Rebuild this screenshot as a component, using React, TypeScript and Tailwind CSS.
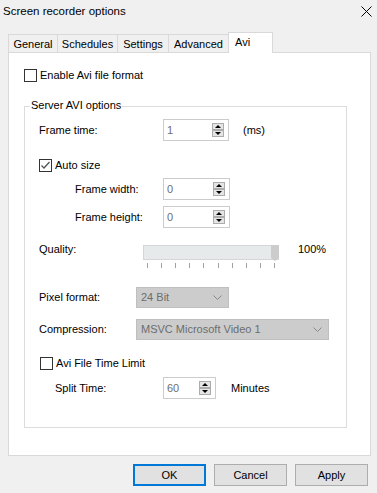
import React from "react";

function Spin() {
  return (
    <svg width="12" height="14" viewBox="0 0 12 14" className="shrink-0">
      <rect x="0.5" y="0.5" width="11" height="6" fill="#e5e5e5" stroke="#acacac" />
      <polygon points="3,5 9,5 6,2" fill="#000" />
      <rect x="0.5" y="7.5" width="11" height="6" fill="#e5e5e5" stroke="#acacac" />
      <polygon points="3,9 9,9 6,12" fill="#000" />
    </svg>
  );
}

function NumInput({ value, w }: { value: string; w: string }) {
  return (
    <div className={`${w} h-[22px] border border-[#cccccc] bg-white flex items-center justify-between pl-[3px] pr-[4px] shrink-0`}>
      <span className="text-[#6d6d6d]">{value}</span>
      <Spin />
    </div>
  );
}

function Check({ checked, label }: { checked?: boolean; label: string }) {
  return (
    <div className="flex items-center gap-[3px] h-[13px]">
      <div className="w-[13px] h-[13px] border border-[#333333] bg-white flex items-center justify-center shrink-0">
        {checked && (
          <svg width="11" height="11" viewBox="0 0 11 11">
            <polyline points="1.5,5.5 4,8 9.5,2" fill="none" stroke="#555555" strokeWidth="1.3" />
          </svg>
        )}
      </div>
      <span className="leading-[15px]">{label}</span>
    </div>
  );
}

function Dropdown({ value, w }: { value: string; w: string }) {
  return (
    <div className={`${w} h-[21px] border border-[#bfbfbf] bg-[#cccccc] flex items-center justify-between pl-[4px] pr-[6px] shrink-0`}>
      <span className="text-[#6d6d6d]">{value}</span>
      <svg width="9" height="5" viewBox="0 0 9 5">
        <polyline points="0.5,0.5 4.5,4.5 8.5,0.5" fill="none" stroke="#8a8a8a" strokeWidth="1" />
      </svg>
    </div>
  );
}

export default function App() {
  const ticks = Array.from({ length: 10 });
  return (
    <div className="w-[377px] h-[493px] bg-[#f0f0f0] text-[11px] text-black font-['Liberation_Sans',Arial,sans-serif] overflow-hidden">
      {/* title bar */}
      <div className="h-[23px] flex items-center justify-between pl-[3px] pr-[5px]">
        <span className="text-[11.5px]">Screen recorder options</span>
        <svg width="11" height="11" viewBox="0 0 11 11">
          <line x1="0.5" y1="0.5" x2="10.5" y2="10.5" stroke="#000" strokeWidth="1" />
          <line x1="10.5" y1="0.5" x2="0.5" y2="10.5" stroke="#000" strokeWidth="1" />
        </svg>
      </div>

      {/* tabs */}
      <div className="h-[29px] flex items-end pl-[8px]">
        <div className="w-[49px] h-[18px] border-l border-t border-[#d9d9d9] flex items-center justify-center pt-[1px]">General</div>
        <div className="w-[60px] h-[18px] border-l border-t border-[#d9d9d9] flex items-center justify-center pt-[1px]">Schedules</div>
        <div className="w-[51px] h-[18px] border-l border-t border-[#d9d9d9] flex items-center justify-center pt-[1px]">Settings</div>
        <div className="w-[60px] h-[18px] border-l border-t border-[#d9d9d9] flex items-center justify-center pt-[1px]">Advanced</div>
        <div className="relative z-10 -mb-px w-[45px] h-[21px] border-l border-t border-r border-[#d9d9d9] bg-white pl-[6px] pt-[2px] leading-[15px]">Avi</div>
      </div>

      {/* panel */}
      <div className="ml-[8px] w-[363px] h-[404px] border border-[#d9d9d9] bg-white pl-[15px]">
        <div className="mt-[16px]">
          <Check label="Enable Avi file format" />
        </div>

        <div className="relative mt-[24px] w-[323px] h-[322px] border border-[#dcdcdc] pl-[14px]">
          <span className="absolute left-[5px] -top-[9px] bg-white px-[1px] leading-[15px]">Server AVI options</span>

          {/* Frame time */}
          <div className="mt-[12px] flex items-center h-[22px]">
            <span className="w-[124px] shrink-0">Frame time:</span>
            <NumInput value="1" w="w-[66px]" />
            <span className="ml-[14px]">(ms)</span>
          </div>

          {/* Auto size */}
          <div className="mt-[18px]">
            <Check checked label="Auto size" />
          </div>

          <div className="mt-[6px] flex items-center h-[22px] pl-[36px]">
            <span className="w-[88px] shrink-0">Frame width:</span>
            <NumInput value="0" w="w-[67px]" />
          </div>
          <div className="mt-[6px] flex items-center h-[22px] pl-[36px]">
            <span className="w-[88px] shrink-0">Frame height:</span>
            <NumInput value="0" w="w-[67px]" />
          </div>

          {/* Quality */}
          <div className="mt-[17px] flex items-start">
            <span className="w-[104px] shrink-0 leading-[15px] -mt-[3px]">Quality:</span>
            <div className="w-[136px] shrink-0">
              <div className="h-[15px] border border-[#d6d6d6] bg-[#e7eaea] flex justify-end">
                <svg width="8" height="16" viewBox="0 0 8 16" className="-mt-px -mr-px">
                  <polygon points="0,0 8,0 8,13 4,16 0,13" fill="#cccccc" />
                </svg>
              </div>
              <div className="mt-[3px] ml-[4px] w-[128px] h-[5px] flex justify-between">
                {ticks.map((_, i) => (
                  <div key={i} className="w-px h-[5px] bg-[#a0a0a0]" />
                ))}
              </div>
            </div>
            <span className="ml-[19px] leading-[15px] -mt-[3px]">100%</span>
          </div>

          {/* Pixel format */}
          <div className="mt-[19px] flex items-center h-[21px]">
            <span className="w-[97px] shrink-0">Pixel format:</span>
            <Dropdown value="24 Bit" w="w-[93px]" />
          </div>

          {/* Compression */}
          <div className="mt-[11px] flex items-center h-[21px]">
            <span className="w-[97px] shrink-0">Compression:</span>
            <Dropdown value="MSVC Microsoft Video 1" w="w-[193px]" />
          </div>

          {/* Avi file time limit */}
          <div className="mt-[17px] ml-[1px]">
            <Check label="Avi File Time Limit" />
          </div>

          <div className="mt-[7px] flex items-center h-[22px] pl-[16px]">
            <span className="w-[108px] shrink-0">Split Time:</span>
            <NumInput value="60" w="w-[53px]" />
            <span className="ml-[15px]">Minutes</span>
          </div>
        </div>
      </div>

      {/* buttons */}
      <div className="mt-[8px] flex justify-end gap-[8px] pr-[9px]">
        <button className="w-[73px] h-[22px] border-2 border-[#0078d7] bg-[#e1e1e1] flex items-center justify-center">OK</button>
        <button className="w-[73px] h-[22px] border border-[#adadad] bg-[#e1e1e1] flex items-center justify-center">Cancel</button>
        <button className="w-[73px] h-[22px] border border-[#adadad] bg-[#e1e1e1] flex items-center justify-center">Apply</button>
      </div>
    </div>
  );
}
